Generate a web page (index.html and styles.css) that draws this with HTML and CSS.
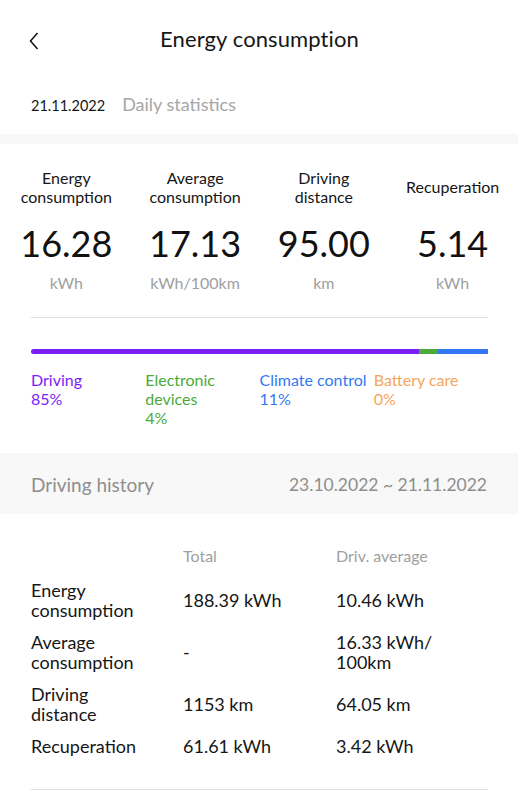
FILE: index.html
```html
<!DOCTYPE html>
<html lang="en">
<head>
<meta charset="utf-8">
<title>Energy consumption</title>
<link rel="stylesheet" href="styles.css">
</head>
<body>
<div class="page">
  <header class="topbar">
    <span class="back"><svg width="10" height="18" viewBox="0 0 10 18"><path d="M8.5 1 L1.5 9 L8.5 17" fill="none" stroke="#111" stroke-width="1.5" stroke-linejoin="miter"/></svg></span>
    <h1 class="title">Energy consumption</h1>
  </header>

  <div class="daterow">
    <span class="date">21.11.2022</span>
    <span class="datelabel">Daily statistics</span>
  </div>

  <div class="band thin"></div>

  <section class="stats">
    <div class="stat">
      <div class="stat-title">Energy<br>consumption</div>
      <div class="stat-value">16.28</div>
      <div class="stat-unit">kWh</div>
    </div>
    <div class="stat">
      <div class="stat-title">Average<br>consumption</div>
      <div class="stat-value">17.13</div>
      <div class="stat-unit">kWh/100km</div>
    </div>
    <div class="stat">
      <div class="stat-title">Driving<br>distance</div>
      <div class="stat-value">95.00</div>
      <div class="stat-unit">km</div>
    </div>
    <div class="stat">
      <div class="stat-title single">Recuperation</div>
      <div class="stat-value">5.14</div>
      <div class="stat-unit">kWh</div>
    </div>
  </section>

  <section class="breakdown">
    <hr class="divider">
    <div class="bar">
      <div class="seg purple" style="width:85%"></div>
      <div class="seg green" style="width:4%"></div>
      <div class="seg blue" style="width:11%"></div>
    </div>
    <div class="legend">
      <div class="item purple-t">Driving<br>85%</div>
      <div class="item green-t">Electronic<br>devices<br>4%</div>
      <div class="item blue-t">Climate control<br>11%</div>
      <div class="item orange-t">Battery care<br>0%</div>
    </div>
  </section>

  <div class="band history">
    <span>Driving history</span>
    <span class="range">23.10.2022 ~ 21.11.2022</span>
  </div>

  <section class="table">
    <div class="cell"></div>
    <div class="cell head">Total</div>
    <div class="cell head">Driv. average</div>

    <div class="cell label">Energy<br>consumption</div>
    <div class="cell val">188.39 kWh</div>
    <div class="cell val">10.46 kWh</div>

    <div class="cell label">Average<br>consumption</div>
    <div class="cell val">-</div>
    <div class="cell val">16.33 kWh/<br>100km</div>

    <div class="cell label">Driving<br>distance</div>
    <div class="cell val">1153 km</div>
    <div class="cell val">64.05 km</div>

    <div class="cell label">Recuperation</div>
    <div class="cell val">61.61 kWh</div>
    <div class="cell val">3.42 kWh</div>
  </section>
  <hr class="divider bottom">
</div>
</body>
</html>
```
FILE: styles.css
```css
* { box-sizing: border-box; }
html, body { margin: 0; padding: 0; background: #fff; }
body {
  font-family: Lato, "Open Sans", "Liberation Sans", sans-serif;
  font-weight: 400;
  color: #161616;
}
.page { width: 519px; }

.topbar {
  position: relative;
  height: 80px;
  padding-bottom: 4px;
  display: flex;
  align-items: center;
  justify-content: center;
}
.back {
  position: absolute;
  left: 29px;
  top: 32px;
  display: flex;
}
.title {
  margin: 0;
  font-size: 22px;
  font-weight: 400;
  color: #161616;
  letter-spacing: 0.1px;
}

.daterow {
  display: flex;
  align-items: baseline;
  gap: 17px;
  padding: 13px 31px 0;
  height: 54px;
}
.date { font-size: 14.5px; color: #161616; }
.datelabel { font-size: 18px; color: #a6a6a6; }

.band { background: #f8f8f8; }
.band.thin { height: 10px; margin-right: 1px; }

.stats {
  display: grid;
  grid-template-columns: repeat(4, 1fr);
  padding: 24px 2px 0;
}
.stat {
  display: flex;
  flex-direction: column;
  align-items: center;
  text-align: center;
}
.stat-title {
  font-size: 16px;
  line-height: 19px;
  height: 38px;
  color: #161616;
}
.stat-title.single { padding-top: 9px; }
.stat-value {
  font-size: 36px;
  line-height: 44px;
  margin-top: 15px;
  color: #111;
}
.stat-unit {
  font-size: 16px;
  color: #a0a0a0;
  margin-top: 8px;
  line-height: 20px;
}

.breakdown { padding: 24px 31px 0; }
.divider {
  border: 0;
  border-top: 1px solid #dedede;
  margin: 0;
}
.bar {
  margin-top: 31px;
  height: 5px;
  display: flex;
  border-radius: 3px 0 0 3px;
  overflow: hidden;
}
.seg { height: 100%; }
.purple { background: #7a1ef8; }
.green { background: #4caa3a; }
.blue { background: #3278f6; }

.legend {
  display: grid;
  grid-template-columns: repeat(4, 1fr);
  margin-top: 16px;
  font-size: 16px;
  line-height: 19px;
  height: 83px;
}
.purple-t { color: #7a1ef8; }
.green-t { color: #4caa3a; }
.blue-t { color: #3278f6; white-space: nowrap; }
.orange-t { color: #f7a55a; }

.band.history {
  height: 61px;
  display: flex;
  justify-content: space-between;
  align-items: center;
  padding: 2px 31px 0;
  font-size: 19px;
  color: #8e8e8e;
  margin-right: 1px;
}
.range { font-size: 17.5px; }

.table {
  display: grid;
  grid-template-columns: 152px 153px 1fr;
  padding: 32px 31px 0;
  row-gap: 12px;
  align-items: center;
}
.cell.head { font-size: 16px; color: #a0a0a0; padding-bottom: 3px; }
.cell.label, .cell.val {
  font-size: 18px;
  line-height: 20px;
  color: #161616;
}
.divider.bottom { margin: 33px 31px 0; }
```
